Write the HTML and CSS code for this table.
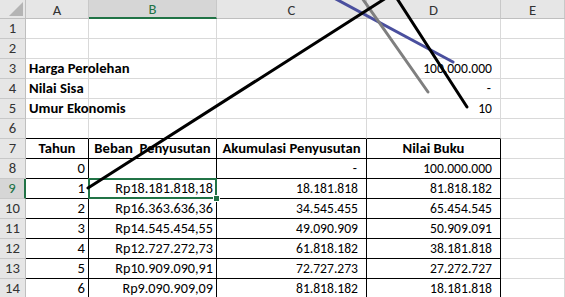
FILE: index.html
```html
<!DOCTYPE html>
<html>
<head>
<meta charset="utf-8">
<link rel="stylesheet" href="styles.css">
</head>
<body>
<div class="sheet">
  <div class="corner"><svg class="tri" width="14" height="14" viewBox="0 0 14 14"><polygon points="14,0 14,14 0,14" fill="#b4b4b4"/></svg></div>
  <div class="h">A</div><div class="h hsel">B</div><div class="h">C</div><div class="h">D</div><div class="h">E</div>

  <div class="rh">1</div><div class="c"></div><div class="c"></div><div class="c"></div><div class="c"></div><div class="c"></div>
  <div class="rh">2</div><div class="c"></div><div class="c"></div><div class="c"></div><div class="c"></div><div class="c"></div>
  <div class="rh">3</div><div class="c b ov">Harga Perolehan</div><div class="c"></div><div class="c"></div><div class="c r pad num">100.000.000</div><div class="c"></div>
  <div class="rh">4</div><div class="c b ov">Nilai Sisa</div><div class="c"></div><div class="c"></div><div class="c r pad dash num">-</div><div class="c"></div>
  <div class="rh">5</div><div class="c b ov">Umur Ekonomis</div><div class="c"></div><div class="c"></div><div class="c r pad num">10</div><div class="c"></div>
  <div class="rh">6</div><div class="c kb"></div><div class="c kb"></div><div class="c kb"></div><div class="c kb"></div><div class="c"></div>

  <div class="rh">7</div><div class="c k b ctr">Tahun</div><div class="c k b ctr">Beban&nbsp; Penyusutan</div><div class="c k b ctr">Akumulasi Penyusutan</div><div class="c k b ctr">Nilai Buku</div><div class="c"></div>
  <div class="rh">8</div><div class="c k r">0</div><div class="c k r"></div><div class="c k r pad dash num">-</div><div class="c k r pad num">100.000.000</div><div class="c"></div>
  <div class="rh rsel">9</div><div class="c k r">1</div><div class="c k r rp sel">Rp18.181.818,18<span class="handle"></span></div><div class="c k r pad num">18.181.818</div><div class="c k r pad num">81.818.182</div><div class="c"></div>
  <div class="rh">10</div><div class="c k r">2</div><div class="c k r rp">Rp16.363.636,36</div><div class="c k r pad num">34.545.455</div><div class="c k r pad num">65.454.545</div><div class="c"></div>
  <div class="rh">11</div><div class="c k r">3</div><div class="c k r rp">Rp14.545.454,55</div><div class="c k r pad num">49.090.909</div><div class="c k r pad num">50.909.091</div><div class="c"></div>
  <div class="rh">12</div><div class="c k r">4</div><div class="c k r rp">Rp12.727.272,73</div><div class="c k r pad num">61.818.182</div><div class="c k r pad num">38.181.818</div><div class="c"></div>
  <div class="rh">13</div><div class="c k r">5</div><div class="c k r rp">Rp10.909.090,91</div><div class="c k r pad num">72.727.273</div><div class="c k r pad num">27.272.727</div><div class="c"></div>
  <div class="rh">14</div><div class="c k r">6</div><div class="c k r rp">Rp9.090.909,09</div><div class="c k r pad num">81.818.182</div><div class="c k r pad num">18.181.818</div><div class="c"></div>
</div>
<svg class="ink" width="565" height="297" viewBox="0 0 565 297">
  <line x1="334" y1="-2" x2="453" y2="62" stroke="#4a4f9e" stroke-width="3" stroke-linecap="round"/>
  <line x1="362" y1="-2" x2="428" y2="92" stroke="#7f7f7f" stroke-width="3" stroke-linecap="round"/>
  <line x1="88" y1="188" x2="386" y2="-2" stroke="#000" stroke-width="3" stroke-linecap="round"/>
  <line x1="396" y1="-3" x2="467" y2="107" stroke="#000" stroke-width="3" stroke-linecap="round"/>
</svg>
</body>
</html>
```

FILE: styles.css
```css
html, body {
  margin: 0;
  padding: 0;
  background: #ffffff;
  overflow: hidden;
}
body {
  width: 565px;
  height: 297px;
  position: relative;
  font-family: "Carlito", "Calibri", "Lato", sans-serif;
  font-size: 14.67px;
  color: #000;
}
.sheet {
  display: grid;
  grid-template-columns: 26px 63px 128px 150px 134px 64px;
  grid-template-rows: 19px repeat(14, 20px);
}
.corner {
  background: #e6e6e6;
  border-right: 1px solid #bfbfbf;
  border-bottom: 1px solid #bfbfbf;
  position: relative;
}
.tri {
  position: absolute;
  right: 2px;
  bottom: 2px;
}
.h {
  background: #e6e6e6;
  border-right: 1px solid #c8c8c8;
  border-bottom: 1px solid #bfbfbf;
  display: flex;
  align-items: center;
  justify-content: center;
  color: #333;
  padding-top: 1px;
}
.hsel {
  background: #d6d6d6;
  color: #217346;
  border-bottom: 2px solid #217346;
}
.rh {
  background: #e6e6e6;
  border-right: 1px solid #bfbfbf;
  border-bottom: 1px solid #c8c8c8;
  display: flex;
  align-items: flex-end;
  justify-content: center;
  color: #333;
  padding-bottom: 1px;
  line-height: 17px;
}
.rsel {
  background: #d6d6d6;
  color: #217346;
  border-right: 2px solid #217346;
}
.c {
  border-right: 1px solid #d9d9d9;
  border-bottom: 1px solid #d9d9d9;
  display: flex;
  align-items: flex-end;
  padding: 0 3px 1px 3px;
  white-space: nowrap;
  line-height: 17px;
  position: relative;
}
.ov {
  overflow: visible;
  z-index: 1;
}
.b { font-weight: 700; }
.r { justify-content: flex-end; }
.ctr { justify-content: center; }
.num { font-size: 13.6px; }
.rp { font-size: 14.2px; }
.pad { padding-right: 8px; }
.dash { padding-right: 9px; }
.kb { border-bottom-color: #000; }
.k {
  border-right-color: #000;
  border-bottom-color: #000;
}
.sel::after {
  content: "";
  position: absolute;
  left: -1px;
  top: -1px;
  right: -1px;
  bottom: -1px;
  border: 2px solid #217346;
}
.handle {
  position: absolute;
  right: -4px;
  bottom: -4px;
  width: 5px;
  height: 5px;
  background: #217346;
  border: 1px solid #fff;
  z-index: 2;
}
.ink {
  position: absolute;
  left: 0;
  top: 0;
  pointer-events: none;
}
```
